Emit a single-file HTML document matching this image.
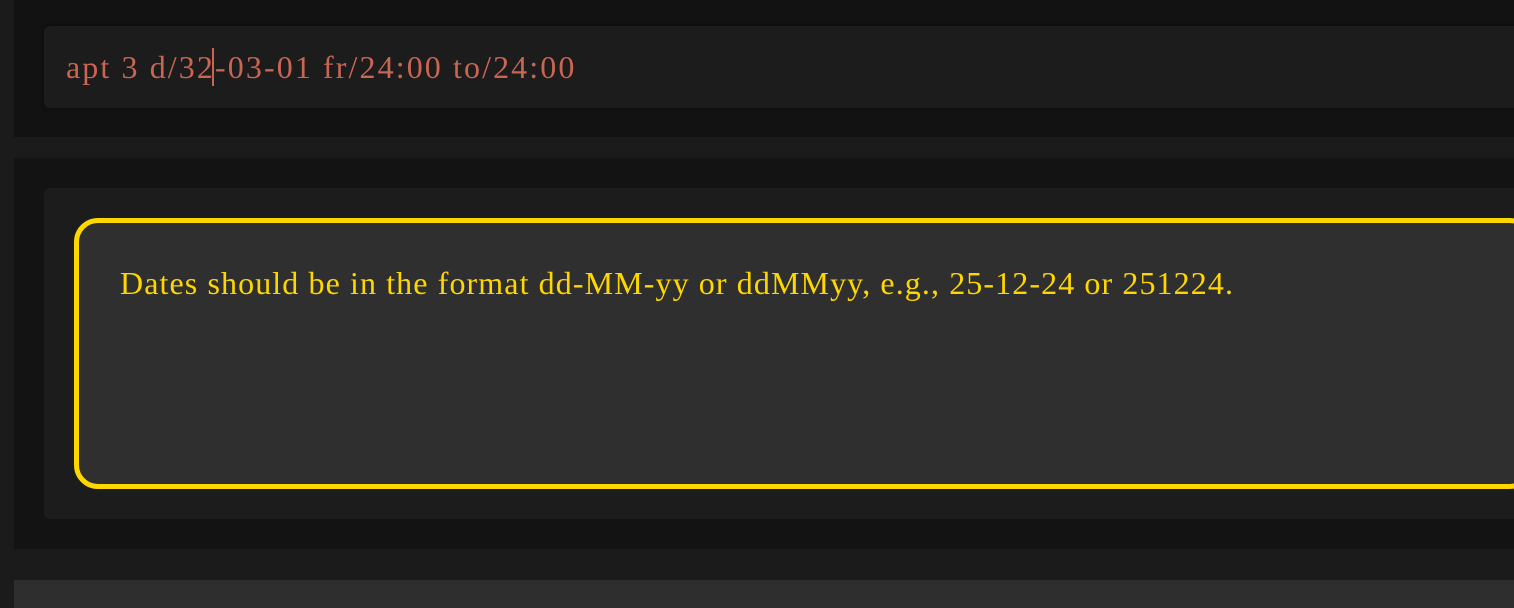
<!DOCTYPE html>
<html><head><meta charset="utf-8"><style>
html,body{margin:0;padding:0;width:1514px;height:608px;overflow:hidden;background:#1b1b1b;font-family:"Liberation Serif",serif;}
.p1{position:absolute;left:14px;top:0;width:1500px;height:137px;background:#121212;}
.inp{position:absolute;left:44px;top:26px;width:1480px;height:82px;background:#1c1c1c;border-radius:6px;box-shadow:0 0 4px rgba(0,0,0,.5);}
.inp span{position:absolute;left:22px;top:23px;font-size:32px;color:#c96553;letter-spacing:2.1px;white-space:nowrap;}
.caret{position:absolute;left:212px;top:48px;width:2px;height:38px;background:#c96553;}
.p2{position:absolute;left:14px;top:158px;width:1500px;height:391px;background:#131313;}
.in2{position:absolute;left:44px;top:188px;width:1480px;height:331px;background:#1c1c1c;border-radius:6px;}
.msg{position:absolute;left:74px;top:218px;width:1460px;height:271px;box-sizing:border-box;border:5px solid #ffd700;border-radius:24px;background:#2f2f2f;}
.msg span{position:absolute;left:41px;top:42px;font-size:32px;color:#ffd700;letter-spacing:1.1px;white-space:nowrap;}
.p3{position:absolute;left:14px;top:580px;width:1500px;height:28px;background:#2e2e2e;}
</style></head><body>
<div class="p1"></div>
<div class="inp"><span>apt 3 d/32-03-01 fr/24:00 to/24:00</span></div>
<div class="caret"></div>
<div class="p2"></div>
<div class="in2"></div>
<div class="msg"><span>Dates should be in the format dd-MM-yy or ddMMyy, e.g., 25-12-24 or 251224.</span></div>
<div class="p3"></div>
</body></html>
